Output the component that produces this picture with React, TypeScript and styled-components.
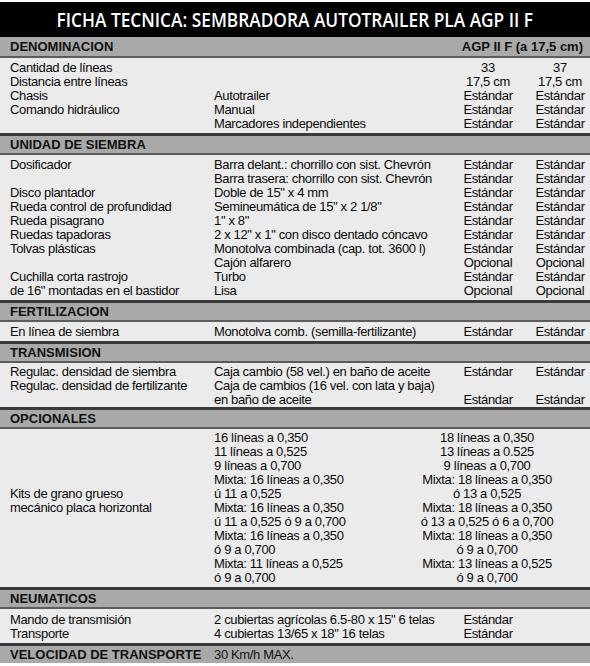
import React from "react";
import styled, { createGlobalStyle } from "styled-components";

const Global = createGlobalStyle`
  html, body { margin: 0; padding: 0; background: #ffffff; }
  body { font-family: "Liberation Sans", Arial, sans-serif; color: #111; }
`;

const Page = styled.div`
  width: 590px;
  padding-top: 2px;
  background: #ffffff;
`;

const Title = styled.div`
  height: 35px;
  background: #000;
  display: flex;
  align-items: center;
  justify-content: center;
  color: #fff;
  font-family: "Open Sans", "Noto Sans", sans-serif;
  font-weight: 600;
  font-size: 19px;
  white-space: nowrap;
`;

const TitleText = styled.span`
  display: inline-block;
  transform: scaleX(0.91);
`;

const Band = styled.div<{ $first?: boolean; $last?: boolean }>`
  display: grid;
  grid-template-columns: 204px 1fr auto;
  align-items: center;
  height: ${(p) => (p.$first ? "19px" : "17px")};
  padding: 0 7px 0 10px;
  background: #a9a9a9;
  border-top: ${(p) => (p.$first ? "none" : "3px solid #3a3a3a")};
  border-bottom: ${(p) => (p.$last ? "none" : "2px solid #5c5c5c")};
  font-size: 13px;
  font-weight: 700;
  color: #111;
  white-space: nowrap;
`;

const BandValue = styled.span<{ $plain?: boolean }>`
  font-weight: ${(p) => (p.$plain ? 400 : 700)};
  letter-spacing: ${(p) => (p.$plain ? "-0.35px" : "0")};
`;

const Body = styled.div<{ $pad?: string }>`
  background: #ebebeb;
  padding: ${(p) => p.$pad ?? "3px 0 2px"};
  padding-left: 10px;
  font-size: 13px;
  line-height: 14px;
  letter-spacing: -0.35px;
  color: #0a0a0a;
`;

const Row = styled.div`
  display: grid;
  grid-template-columns: 204px 238px 72px 1fr;
  height: 14px;
  white-space: nowrap;
`;

const Cell = styled.span<{ $center?: boolean; $shift?: boolean }>`
  text-align: ${(p) => (p.$center ? "center" : "left")};
  padding-left: ${(p) => (p.$shift ? "6px" : "0")};
`;

const OptGrid = styled.div`
  display: grid;
  grid-template-columns: 204px 190px 166px;
`;

const OptLabel = styled.div`
  padding-top: 56px;
  white-space: nowrap;
`;

const OptCol = styled.div<{ $center?: boolean }>`
  display: flex;
  flex-direction: column;
  align-items: ${(p) => (p.$center ? "center" : "flex-start")};
  white-space: nowrap;
`;

const Line = styled.span`
  height: 14px;
`;

type R = [string, string, string?, string?];

const denominacion: R[] = [
  ["Cantidad de líneas", "", "33", "37"],
  ["Distancia entre líneas", "", "17,5 cm", "17,5 cm"],
  ["Chasis", "Autotrailer", "Estándar", "Estándar"],
  ["Comando hidráulico", "Manual", "Estándar", "Estándar"],
  ["", "Marcadores independientes", "Estándar", "Estándar"],
];

const siembra: R[] = [
  ["Dosificador", "Barra delant.: chorrillo con sist. Chevrón", "Estándar", "Estándar"],
  ["", "Barra trasera: chorrillo con sist. Chevrón", "Estándar", "Estándar"],
  ["Disco plantador", "Doble de 15\" x 4 mm", "Estándar", "Estándar"],
  ["Rueda control de profundidad", "Semineumática de 15\" x 2 1/8\"", "Estándar", "Estándar"],
  ["Rueda pisagrano", "1\" x 8\"", "Estándar", "Estándar"],
  ["Ruedas tapadoras", "2 x 12\" x 1\" con disco dentado cóncavo", "Estándar", "Estándar"],
  ["Tolvas plásticas", "Monotolva combinada (cap. tot. 3600 l)", "Estándar", "Estándar"],
  ["", "Cajón alfarero", "Opcional", "Opcional"],
  ["Cuchilla corta rastrojo", "Turbo", "Estándar", "Estándar"],
  ["de 16\" montadas en el bastidor", "Lisa", "Opcional", "Opcional"],
];

const fertilizacion: R[] = [
  ["En línea de siembra", "Monotolva comb. (semilla-fertilizante)", "Estándar", "Estándar"],
];

const transmision: R[] = [
  ["Regulac. densidad de siembra", "Caja cambio (58 vel.) en baño de aceite", "Estándar", "Estándar"],
  ["Regulac. densidad de fertilizante", "Caja de cambios (16 vel. con lata y baja)", "", ""],
  ["", "en baño de aceite", "Estándar", "Estándar"],
];

const neumaticos: R[] = [
  ["Mando de transmisión", "2 cubiertas agrícolas 6.5-80 x 15\" 6 telas", "Estándar", ""],
  ["Transporte", "4 cubiertas 13/65 x 18\" 16 telas", "Estándar", ""],
];

const optA = [
  "16 líneas a 0,350",
  "11 líneas a 0,525",
  "9 líneas a 0,700",
  "Mixta: 16 líneas a 0,350",
  "ú 11 a 0,525",
  "Mixta: 16 líneas a 0,350",
  "ú 11 a 0,525 ó 9 a 0,700",
  "Mixta: 16 líneas a 0,350",
  "ó 9 a 0,700",
  "Mixta: 11 líneas a 0,525",
  "ó 9 a 0,700",
];

const optB = [
  "18 líneas a 0,350",
  "13 líneas a 0.525",
  "9 líneas a 0,700",
  "Mixta: 18 líneas a 0,350",
  "ó 13 a 0,525",
  "Mixta: 18 líneas a 0,350",
  "ó 13 a 0,525 ó 6 a 0,700",
  "Mixta: 18 líneas a 0,350",
  "ó 9 a 0,700",
  "Mixta: 13 líneas a 0,525",
  "ó 9 a 0,700",
];

const Rows: React.FC<{ rows: R[]; pad?: string }> = ({ rows, pad }) => (
  <Body $pad={pad}>
    {rows.map((r, i) => (
      <Row key={i}>
        <Cell>{r[0]}</Cell>
        <Cell>{r[1]}</Cell>
        <Cell $center>{r[2] ?? ""}</Cell>
        <Cell $center $shift>
          {r[3] ?? ""}
        </Cell>
      </Row>
    ))}
  </Body>
);

export default function App() {
  return (
    <Page>
      <Global />
      <Title>
        <TitleText>FICHA TECNICA: SEMBRADORA AUTOTRAILER PLA AGP II F</TitleText>
      </Title>

      <Band $first>
        <span>DENOMINACION</span>
        <span />
        <span>AGP II F (a 17,5 cm)</span>
      </Band>
      <Rows rows={denominacion} />

      <Band>
        <span>UNIDAD DE SIEMBRA</span>
      </Band>
      <Rows rows={siembra} />

      <Band>
        <span>FERTILIZACION</span>
      </Band>
      <Rows rows={fertilizacion} />

      <Band>
        <span>TRANSMISION</span>
      </Band>
      <Rows rows={transmision} pad="2px 0 0" />

      <Band>
        <span>OPCIONALES</span>
      </Band>
      <Body $pad="2px 0 2px">
        <OptGrid>
          <OptLabel>
            Kits de grano grueso
            <br />
            mecánico placa horizontal
          </OptLabel>
          <OptCol>
            {optA.map((t, i) => (
              <Line key={i}>{t}</Line>
            ))}
          </OptCol>
          <OptCol $center>
            {optB.map((t, i) => (
              <Line key={i}>{t}</Line>
            ))}
          </OptCol>
        </OptGrid>
      </Body>

      <Band>
        <span>NEUMATICOS</span>
      </Band>
      <Rows rows={neumaticos} pad="4px 0 2px" />

      <Band $last>
        <span>VELOCIDAD DE TRANSPORTE</span>
        <BandValue $plain>30 Km/h MAX.</BandValue>
      </Band>
    </Page>
  );
}
